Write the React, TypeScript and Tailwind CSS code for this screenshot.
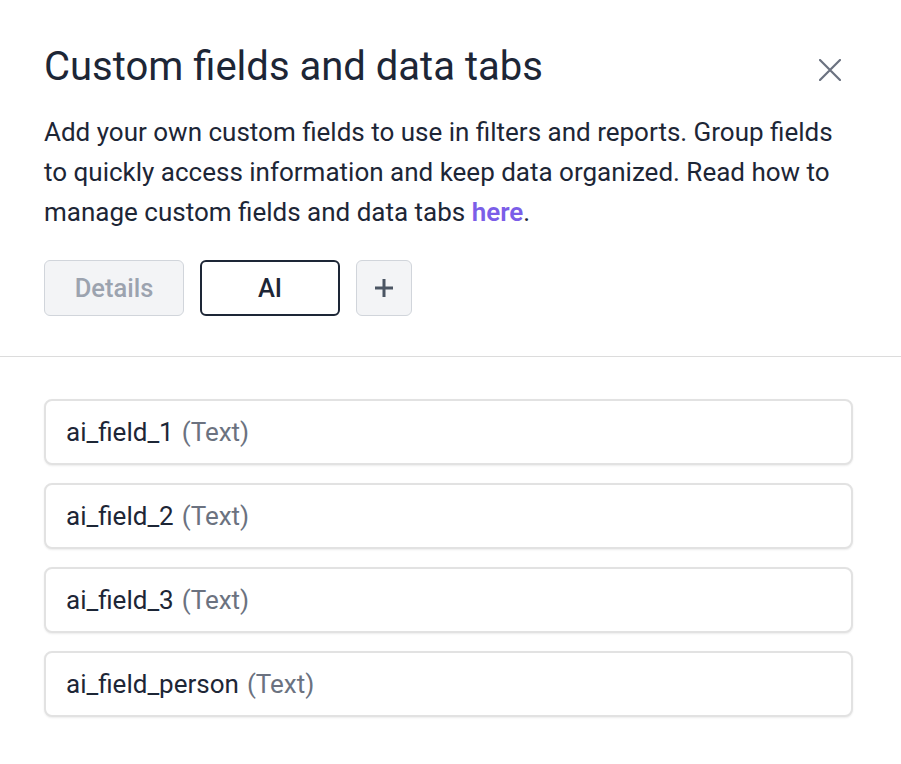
const fields = ['ai_field_1', 'ai_field_2', 'ai_field_3', 'ai_field_person']

export default function App() {
  return (
    <div className="min-h-screen bg-white font-['Roboto',sans-serif] text-[#1d2636]">
      <div className="px-[44px] pt-[43px] pb-[40px]">
        <div className="flex items-start justify-between">
          <h1 className="text-[40px] leading-[48px] font-normal">Custom fields and data tabs</h1>
          <button type="button" className="mr-[16px] mt-[16px] text-[#6b7280]">
            <svg width="22" height="22" viewBox="0 0 22 22" fill="none" stroke="currentColor" strokeWidth="2.2" strokeLinecap="round">
              <path d="M1 1L21 21M21 1L1 21" />
            </svg>
          </button>
        </div>
        <p className="mt-[21px] text-[26px] leading-[40px]">
          Add your own custom fields to use in filters and reports. Group fields to quickly access information and keep
          data organized. Read how to manage custom fields and data tabs{' '}
          <a className="font-semibold text-[#7b5ee8]">here</a>.
        </p>
        <div className="mt-[28px] flex gap-4">
          <button
            type="button"
            className="h-[56px] w-[140px] rounded-md border border-[#d1d5db] bg-[#f3f4f6] text-[25.5px] font-medium text-[#9ca3af]"
          >
            Details
          </button>
          <button
            type="button"
            className="h-[56px] w-[140px] rounded-md border-2 border-[#1d2636] bg-white text-[25.5px] font-medium text-[#1d2636]"
          >
            AI
          </button>
          <button
            type="button"
            className="flex h-[56px] w-[56px] items-center justify-center rounded-md border border-[#d1d5db] bg-[#f3f4f6] text-[#4b5563]"
          >
            <svg width="18" height="18" viewBox="0 0 18 18" fill="none" stroke="currentColor" strokeWidth="3">
              <path d="M9 0V18M0 9H18" />
            </svg>
          </button>
        </div>
      </div>
      <div className="h-px bg-[#dcdcdc]" />
      <div className="flex flex-col gap-[18px] pl-[44px] pr-[48px] pt-[42px]">
        {fields.map((f) => (
          <div
            key={f}
            className="flex h-[66px] items-center rounded-lg border-2 border-[#e2e2e2] bg-white px-[20px] text-[26px] shadow-[0_1px_2px_rgba(0,0,0,0.08)]"
          >
            <span>{f}</span>
            <span className="ml-[8px] text-[#6b7280]">(Text)</span>
          </div>
        ))}
      </div>
    </div>
  )
}
